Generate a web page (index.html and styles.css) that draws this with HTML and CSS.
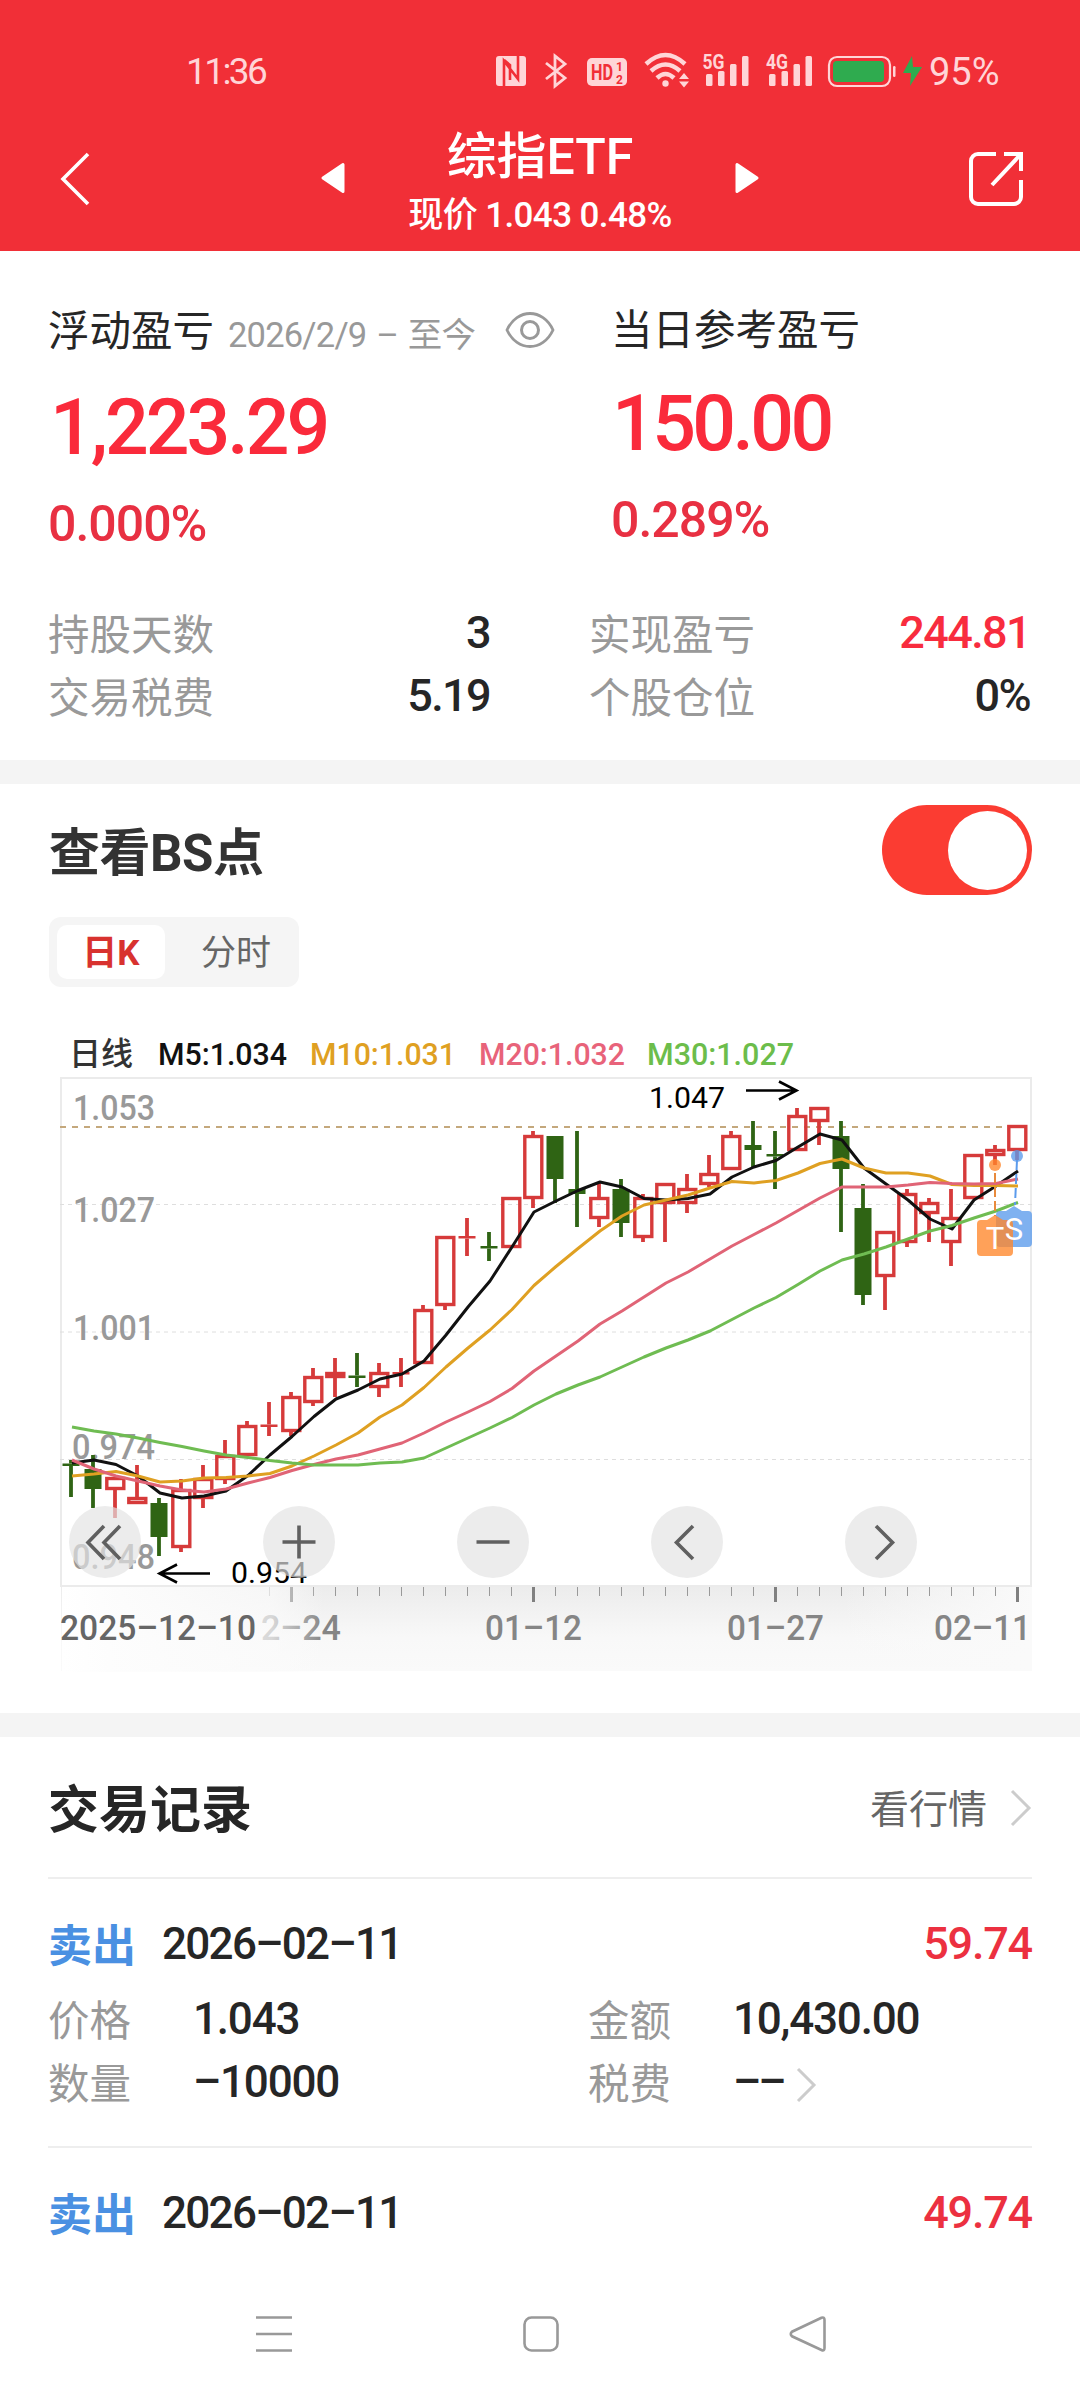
FILE: index.html
```html
<!DOCTYPE html>
<html lang="zh-CN">
<head>
<meta charset="utf-8">
<title>综指ETF</title>
<link rel="stylesheet" href="styles.css">
</head>
<body>
<header class="header">
  <div class="status">
    <span class="time">11:36</span>
    <svg class="status-icons" width="432" height="40" viewBox="494 50 432 40">
      <g fill="#ffd5d7">
        <rect x="496" y="56" width="30" height="30" rx="3"/>
        <path d="M504 86V61l14 18V56M504 60l6 5v15" fill="none" stroke="#f12f37" stroke-width="2.6"/>
        <path d="M546 63l19 15-10 8V56l10 8-19 15" fill="none" stroke="#ffd5d7" stroke-width="2.8"/>
        <rect x="587" y="58" width="40" height="28" rx="5"/>
        <path d="M646 64Q665.500 46 685 64" fill="none" stroke="#ffd5d7" stroke-width="4.500"/>
        <path d="M651 71Q665.500 58 680 71" fill="none" stroke="#ffd5d7" stroke-width="4.500"/>
        <path d="M657 78Q665.500 70 674 78" fill="none" stroke="#ffd5d7" stroke-width="4.500"/>
        <circle cx="665.500" cy="83.500" r="3.200"/>
        <path d="M679 79l5-6 5 6zM679 81.500l5 6 5-6z"/>
        <rect x="706" y="74" width="6.500" height="12" rx="1.500"/><rect x="718" y="71" width="6.500" height="15" rx="1.500"/><rect x="730" y="64" width="6.500" height="22" rx="1.500"/><rect x="742" y="56" width="6.500" height="30" rx="1.500"/>
        <rect x="769" y="74" width="6.500" height="12" rx="1.500"/><rect x="781.500" y="71" width="6.500" height="15" rx="1.500"/><rect x="793.500" y="64" width="6.500" height="22" rx="1.500"/><rect x="805.500" y="56" width="6.500" height="30" rx="1.500"/>
        <rect x="829" y="57" width="61" height="29" rx="8" fill="none" stroke="#ffd5d7" stroke-width="2.200"/>
        <rect x="893" y="66" width="2.500" height="11" rx="1.200"/>
      </g>
      <rect x="833" y="61" width="51" height="21" rx="4" fill="#2fab4f"/>
      <path d="M912 56l-9 17h8l-1 13 12-19h-9z" fill="#2fab4f"/>
      <g class="status-text">
        <text x="591" y="80" font-size="22" textLength="22" lengthAdjust="spacingAndGlyphs" fill="#f12f37">HD</text>
        <text x="616" y="71" font-size="12" fill="#f12f37">1</text>
        <text x="616" y="84" font-size="12" fill="#f12f37">2</text>
        <text x="702.500" y="69" font-size="20" textLength="22" lengthAdjust="spacingAndGlyphs" fill="#ffd5d7">5G</text>
        <text x="766" y="69" font-size="20" textLength="22" lengthAdjust="spacingAndGlyphs" fill="#ffd5d7">4G</text>
      </g>
    </svg>
    <span class="percent">95%</span>
  </div>
  <div class="nav">
    <svg class="back" width="34" height="56" viewBox="0 0 34 56"><path d="M30 3L5 28l25 25" fill="none" stroke="#fff" stroke-width="3.600"/></svg>
    <svg class="prev" width="24" height="32" viewBox="0 0 24 32"><path d="M22 2.500v27L2 16z" fill="#fff" stroke="#fff" stroke-width="3" stroke-linejoin="round"/></svg>
    <div class="heading">
      <h1>综指ETF</h1>
      <p>现价 1.043 0.48%</p>
    </div>
    <svg class="next" width="24" height="32" viewBox="0 0 24 32"><path d="M2 2.500v27L22 16z" fill="#fff" stroke="#fff" stroke-width="3" stroke-linejoin="round"/></svg>
    <svg class="share" width="56" height="56" viewBox="0 0 56 56"><path d="M28 3H10a7 7 0 0 0-7 7v36a7 7 0 0 0 7 7h36a7 7 0 0 0 7-7V29M36 3h17v17M53 3L24 34" fill="none" stroke="#fff" stroke-width="4"/></svg>
  </div>
</header>

<section class="summary">
  <div class="gains">
    <div class="gain gain-total">
      <div class="gain-label">浮动盈亏 <small>2026/2/9 – 至今</small>
        <svg width="50" height="38" viewBox="0 0 50 38"><path d="M2 19C12-3 38-3 48 19 38 41 12 41 2 19z" fill="none" stroke="#999" stroke-width="2.800"/><circle cx="25" cy="19" r="8.500" fill="none" stroke="#999" stroke-width="3"/></svg>
      </div>
      <div class="amount">1,223.29</div>
      <div class="rate">0.000%</div>
    </div>
    <div class="gain gain-day">
      <div class="gain-label">当日参考盈亏</div>
      <div class="amount">150.00</div>
      <div class="rate">0.289%</div>
    </div>
  </div>
  <dl class="stats">
    <div><dt>持股天数</dt><dd>3</dd></div>
    <div><dt>实现盈亏</dt><dd class="red">244.81</dd></div>
    <div><dt>交易税费</dt><dd>5.19</dd></div>
    <div><dt>个股仓位</dt><dd>0%</dd></div>
  </dl>
</section>

<section class="kline">
  <div class="kline-head">
    <h2>查看BS点</h2>
    <span class="toggle"></span>
  </div>
  <div class="tabs"><span class="tab active">日K</span><span class="tab">分时</span></div>
  <div class="chart">
    <svg id="chart" width="1080" height="660" viewBox="0 1026 1080 660">
      <defs>
        <linearGradient id="shade" x1="0" y1="0" x2="0" y2="1"><stop offset="0" stop-color="#ececec"/><stop offset=".6" stop-color="#f8f8f8"/><stop offset="1" stop-color="#fafafa"/></linearGradient>
        <linearGradient id="fade" x1="0" y1="0" x2="1" y2="0"><stop offset="0" stop-color="#fff"/><stop offset=".2" stop-color="#fdfdfd" stop-opacity=".95"/><stop offset=".8" stop-color="#fbfbfb" stop-opacity=".7"/><stop offset="1" stop-color="#fbfbfb" stop-opacity="0"/></linearGradient>
        <linearGradient id="fade-right" x1="0" y1="0" x2="1" y2="0"><stop offset="0" stop-color="#fafafa" stop-opacity="0"/><stop offset="1" stop-color="#fafafa"/></linearGradient>
      </defs>
      <g class="legend">
        <text x="69" y="1065" fill="#333" textLength="64">日线</text>
        <text x="158" y="1065" fill="#111" textLength="129" lengthAdjust="spacingAndGlyphs">M5:1.034</text>
        <text x="310" y="1065" fill="#dfa022" textLength="146" lengthAdjust="spacingAndGlyphs">M10:1.031</text>
        <text x="479" y="1065" fill="#e8637a" textLength="146" lengthAdjust="spacingAndGlyphs">M20:1.032</text>
        <text x="647" y="1065" fill="#6cbd4b" textLength="147" lengthAdjust="spacingAndGlyphs">M30:1.027</text>
      </g>
      <rect x="61" y="1078" width="970" height="508" fill="none" stroke="#ebebeb" stroke-width="2"/>
      <path d="M60 1204.500H1032M60 1332H1032M60 1459.500H1032" stroke="#dedede" stroke-dasharray="4 4"/>
      <path d="M60 1127H1006" stroke="#c4a87c" stroke-width="2" stroke-dasharray="6 6"/>
      <g class="prices">
        <text x="73" y="1120" textLength="82" lengthAdjust="spacingAndGlyphs">1.053</text>
        <text x="73" y="1222" textLength="82" lengthAdjust="spacingAndGlyphs">1.027</text>
        <text x="73" y="1340" textLength="82" lengthAdjust="spacingAndGlyphs">1.001</text>
        <text x="72" y="1459" textLength="83" lengthAdjust="spacingAndGlyphs">0.974</text>
        <text x="72" y="1569" textLength="83" lengthAdjust="spacingAndGlyphs">0.948</text>
      </g>
      <rect x="61" y="1587" width="971" height="84" fill="url(#shade)"/>
      <rect x="840" y="1587" width="192" height="84" fill="url(#fade-right)"/>
      <path id="ticks" stroke="#999" fill="none"/>
      <path d="M291.500 1587v15M533.500 1587v15M775.500 1587v15M1017.500 1587v15" stroke="#808080" stroke-width="3"/>
      <g class="dates">
        <text x="261" y="1640" textLength="80" lengthAdjust="spacingAndGlyphs">2–24</text>
        <text x="485" y="1640" textLength="97" lengthAdjust="spacingAndGlyphs">01–12</text>
        <text x="727" y="1640" textLength="97" lengthAdjust="spacingAndGlyphs">01–27</text>
        <text x="934" y="1640" textLength="97" lengthAdjust="spacingAndGlyphs">02–11</text>
        <rect x="62" y="1587" width="262" height="85" fill="url(#fade)"/>
        <text x="60" y="1640" fill="#666" textLength="196" lengthAdjust="spacingAndGlyphs">2025–12–10</text>
      </g>
      <g id="candles"></g>
      <g id="averages" fill="none" stroke-width="3" stroke-linejoin="round"></g>
      <g fill="none" stroke="#000" stroke-width="2.600">
        <path d="M746 1090.500h50M779 1081.500l17.500 9-17.500 9"/>
        <path d="M210 1573.500h-50M177 1564.500l-17.500 9 17.500 9"/>
      </g>
      <g class="extremes">
        <text x="649" y="1108" textLength="76" lengthAdjust="spacingAndGlyphs">1.047</text>
        <text x="231" y="1582.500" textLength="76" lengthAdjust="spacingAndGlyphs">0.954</text>
      </g>
      <path d="M1017 1160L1015 1205" stroke="#5b9bec" stroke-width="2" stroke-dasharray="10 4"/>
      <path d="M995 1173V1216" stroke="#e88a3c" stroke-width="2" stroke-dasharray="10 4"/>
      <g fill-opacity=".78">
        <circle cx="1017" cy="1156" r="6" fill="#5b9bec"/>
        <circle cx="995" cy="1165" r="6" fill="#ff872a"/>
        <path d="M1000 1211h6l8-5 8 5h6a4 4 0 0 1 4 4v28a4 4 0 0 1-4 4h-28a4 4 0 0 1-4-4v-28a4 4 0 0 1 4-4z" fill="#5b9bec"/>
        <path d="M981 1220h6l8-5 8 5h6a4 4 0 0 1 4 4v28a4 4 0 0 1-4 4h-28a4 4 0 0 1-4-4v-28a4 4 0 0 1 4-4z" fill="#ff872a"/>
      </g>
      <g class="marks"><text x="1014" y="1240">S</text><text x="995" y="1249">T</text></g>
    </svg>
    <div class="controls">
      <span><svg viewBox="0 0 72 72"><path d="M35 20L19 36.500 35 53M51 20L35 36.500 51 53"/></svg></span>
      <span><svg viewBox="0 0 72 72"><path d="M36 19.500v33M19.500 36h33"/></svg></span>
      <span><svg viewBox="0 0 72 72"><path d="M19.500 36h33"/></svg></span>
      <span><svg viewBox="0 0 72 72"><path d="M42 20L25.500 36.500 42 53"/></svg></span>
      <span><svg viewBox="0 0 72 72"><path d="M31 20L47.500 36.500 31 53"/></svg></span>
    </div>
  </div>
</section>

<section class="records">
  <div class="records-head">
    <h2>交易记录</h2>
    <span>看行情</span>
    <svg width="22" height="38" viewBox="0 0 22 38"><path d="M2 2l17 17L2 36" fill="none" stroke="#ccc" stroke-width="3"/></svg>
  </div>
  <article class="record">
    <div class="record-head"><b>卖出</b><time>2026–02–11</time><em>59.74</em></div>
    <dl>
      <dt>价格</dt><dd>1.043</dd><dt>金额</dt><dd>10,430.00</dd>
      <dt>数量</dt><dd>–10000</dd><dt>税费</dt><dd class="tax">–– <svg width="22" height="36" viewBox="0 0 22 36"><path d="M2 2l16 16L2 34" fill="none" stroke="#ccc" stroke-width="3"/></svg></dd>
    </dl>
  </article>
  <article class="record">
    <div class="record-head"><b>卖出</b><time>2026–02–11</time><em>49.74</em></div>
  </article>
</section>

<footer class="system-nav">
  <svg width="38" height="38" viewBox="0 0 38 38"><path d="M1 2.500h36M1 19h36M1 35.500h36"/></svg>
  <svg width="38" height="38" viewBox="0 0 38 38"><rect x="2.500" y="2.500" width="33" height="33" rx="7"/></svg>
  <svg width="38" height="38" viewBox="0 0 38 38"><path d="M32.500 2.800Q35.500 1.500 35.500 5v28q0 3.500-3 2L3 21.300Q.5 19 3 16.700z"/></svg>
</footer>
<script src="chart.js"></script>
</body>
</html>
```
FILE: styles.css
```css
* { box-sizing: border-box; margin: 0; padding: 0; }
body { width: 1080px; height: 2400px; overflow: hidden; background: #fff; color: #262626; font-family: Roboto, "Noto Sans CJK SC", sans-serif; }
svg { display: block; flex: none; }
h1, h2, b, em { font-weight: 500; font-style: normal; }

.header { height: 251px; background: #f12f37; color: #fff; }
.status { display: flex; align-items: center; height: 104px; padding: 40px 0 0 186px; color: #ffd5d7; font-size: 37px; line-height: 64px; }
.time { width: 308px; letter-spacing: -2.600px; }
.status-icons { margin-top: -4px; }
.percent { margin-left: 3px; font-size: 38px; letter-spacing: 0; }
.status-text { font-family: Roboto, sans-serif; font-weight: 700; }
.nav { display: flex; align-items: flex-start; padding-left: 58px; }
.back { margin-top: 47px; }
.prev { margin: 58px 0 0 229px; }
.heading { width: 390px; text-align: center; }
.heading h1 { height: 96px; padding-top: 17px; font-size: 50px; line-height: 72px; letter-spacing: 0; }
.heading p { font-size: 35px; font-weight: 500; line-height: 44px; letter-spacing: -.6px; margin-top: -6px; }
.next { margin-top: 58px; }
.share { margin: 47px 0 0 209px; }

.summary { height: 509px; padding: 48px 49px 0 48px; }
.gains { display: grid; grid-template-columns: 563px 1fr; height: 303px; }
.gain-label { display: flex; align-items: center; height: 64px; font-size: 41.500px; line-height: 64px; }
.gain-total .gain-label { padding-top: 2px; }
.gain-label small { margin: 6px 0 0 14px; color: #999; font-size: 34.500px; letter-spacing: -.8px; word-spacing: 2px; }
.gain-label svg { margin: -4px 0 0 30px; }
.amount { margin-top: 16px; color: #fa2a3b; font-size: 77px; font-weight: 500; line-height: 90px; letter-spacing: -3px; }
.rate { margin-top: 14px; color: #e83042; font-size: 50px; font-weight: 500; line-height: 74px; letter-spacing: -1px; }
.gain-total .amount { padding-left: 2px; margin-top: 20px; }
.gain-day .amount { padding-left: 1px; letter-spacing: -3.600px; }
.stats { display: grid; grid-template-columns: 442px 441px; column-gap: 99px; margin-top: -1px; }
.stats div { display: flex; justify-content: space-between; height: 63px; font-size: 41.500px; line-height: 63px; }
.stats dt { padding-top: 3px; color: #999; }
.stats dd { font-size: 45px; font-weight: 500; letter-spacing: -1.600px; }
.stats .red { color: #f82c3e; }

.kline { height: 953px; border-top: 24px solid #f4f4f4; }
.kline-head { display: flex; justify-content: space-between; height: 133px; padding: 21px 48px 0 49px; }
.kline-head h2 { padding-top: 4px; color: #333; font-size: 51px; font-weight: 700; line-height: 90px; letter-spacing: -.5px; }
.toggle { display: flex; justify-content: flex-end; width: 150px; height: 90px; padding: 5.500px; border-radius: 45px; background: #fb3c32; }
.toggle::after { content: ""; width: 79px; height: 79px; border-radius: 50%; background: #fff; }
.tabs { display: flex; width: 250px; height: 70px; margin-left: 49px; padding: 8px; border-radius: 12px; background: #f5f5f5; }
.tab { width: 108px; text-align: center; font-size: 35px; line-height: 56px; color: #666; }
.tab.active { border-radius: 10px; background: #fff; color: #d8322f; font-weight: 700; }
.tab { padding-top: 1px; }
.tab + .tab { margin-left: 17px; }
.chart { position: relative; margin-top: 39px; height: 660px; }
.chart text { font-family: Roboto, "Noto Sans CJK SC", sans-serif; }
.legend text { font-size: 32px; font-weight: 500; }
.prices text { fill: #999; font-size: 35px; font-weight: 500; }
.dates text { font-size: 35px; font-weight: 500; fill: #858585; }
.dates text:last-child { fill: #666; }
.extremes text { font-size: 30px; }
.marks text { fill: #fff; font-size: 31px; text-anchor: middle; }
.controls { position: absolute; left: 69px; top: 480px; display: flex; gap: 122px; }
.controls span { width: 72px; height: 72px; border-radius: 50%; background: rgba(227, 227, 227, .68); }
.controls path { fill: none; stroke: #606060; stroke-width: 3.600px; }

.records { height: 553px; border-top: 24px solid #f4f4f4; padding: 0 48px; }
.records-head { display: flex; align-items: center; height: 140px; padding-top: 2px; }
.records-head h2 { flex: 1; margin-top: -5px; font-size: 51px; font-weight: 700; }
.records-head span { margin: -4px 23px 0 0; color: #666; font-size: 39px; }
.record { border-top: 2px solid #eee; height: 269px; }
.record-head { display: flex; height: 110px; padding-top: 33px; line-height: 64px; }
.record-head b { width: 114px; padding-top: 3px; color: #4a90e2; font-size: 44px; font-weight: 700; }
.record-head time { flex: 1; font-size: 44px; font-weight: 500; letter-spacing: -1.700px; }
.record-head em { color: #ec3040; font-size: 45px; font-weight: 500; letter-spacing: -1.200px; }
.record dl { display: grid; grid-template-columns: 145px 395px 145px 1fr; margin-top: -1px; font-size: 41.500px; line-height: 63px; }
.record dt { height: 63px; padding-top: 2px; color: #999; }
.record dd { display: flex; align-items: center; height: 63px; font-size: 44px; font-weight: 500; letter-spacing: -1.200px; }
.record dd.tax { letter-spacing: -3px; }
.record dd svg { margin: 4px 0 0 12px; }

.system-nav { display: flex; gap: 229px; padding: 49px 0 0 255px; }
.system-nav path, .system-nav rect { fill: none; stroke: #999; stroke-width: 2.600px; }
```
FILE: chart.js
```js
// Daily candles: [up, high, body top, body bottom, low] in chart units
const candles = [
  [0,1460,1463.5,1466,1497],[0,1455,1469,1489,1508],[1,1477,1477,1490,1518],[1,1465,1497,1504,1504],[0,1498,1503,1537,1556],
  [1,1479,1489,1548,1552],[1,1465,1478,1499,1508],[1,1440,1455,1480,1484],[1,1421,1425,1456,1456],[1,1402,1424.5,1427,1436],
  [1,1392,1396,1432,1436],[1,1368,1376,1403,1406],[1,1358,1372,1378,1397],[0,1353,1375.5,1378,1387],[1,1363,1372,1388,1397],
  [1,1358,1372,1374.5,1387],[1,1305,1309,1364,1364],[1,1236,1236,1306,1310],[1,1218,1236,1238.5,1256],[0,1232,1246,1248.5,1261],
  [1,1197,1197,1248,1248],[1,1131,1135,1199,1208],[0,1136,1136,1179,1203],[0,1131,1189,1194,1227],[1,1182,1197,1219,1227],
  [0,1179,1189,1223,1237],[1,1194,1197,1238,1242],[1,1183,1183,1204,1242],[1,1174,1188,1204,1213],[1,1155,1173,1185,1187],
  [1,1131,1135,1170,1170],[0,1121,1145,1150,1167],[0,1131,1154,1156.5,1189],[1,1108,1115,1151,1151],[1,1107,1107,1122,1145],
  [0,1121,1136,1169,1232],[0,1184,1208,1295,1305],[1,1231,1231,1277,1310],[1,1189,1193,1243,1247],[1,1198,1202,1214,1242],
  [1,1189,1217,1243,1266],[1,1154,1154,1199,1199],[1,1145,1149,1156,1165],[1,1125,1125,1151,1160]
];
const averages = {
  '#111': [1463,1460,1464.5,1476,1493,1498,1496,1491,1475.5,1455,1436.5,1416.5,1399,1390,1379,1374,1361,1335,1307,1281,1247,1212,1201,1190.5,1182,1187,1198.5,1200,1198.5,1194,1177,1167,1160.5,1147,1134,1140,1168,1184,1200,1219,1229,1200,1186,1171],
  '#dfa022': [1476,1474,1471.5,1476,1482,1481,1478,1477.5,1476,1473.5,1466,1456,1445,1433,1417,1405,1387.5,1367,1348,1330,1309.5,1285.5,1266.5,1248.5,1231,1216,1205,1200,1195,1188,1181.5,1183,1180.5,1173,1163.5,1159,1168,1173,1173,1176,1184.5,1185.5,1185.5,1186],
  '#e06476': [1460,1469,1476,1481,1486,1490,1492,1489,1483,1477.5,1470.5,1464.5,1459,1455,1449,1443,1433,1422,1412,1401.5,1388.5,1371,1356,1341,1324,1311,1297,1283,1272,1259,1246,1234.5,1223,1210.5,1198,1187,1187,1187,1185,1182.5,1183.5,1184,1183.5,1179],
  '#6fbc52': [1427,1431,1434,1438,1442.5,1446.5,1451,1455,1457.5,1460.5,1463,1465,1465,1465,1463,1462,1458,1448,1438,1428,1417.5,1405,1394,1385,1377,1367,1357,1348,1340,1331,1319.5,1308,1297.5,1284.5,1271,1260,1254,1247,1239,1231,1225.5,1218,1211,1202.5]
};
const x = i => 71 + 22 * i;
document.getElementById('candles').innerHTML = candles.map(([up, high, top, bottom, low], i) => {
  const c = up ? '#d63a3a' : '#2f6414', h = bottom - top;
  const wick = `<path d="M${x(i)} ${high}V${top}M${x(i)} ${bottom}V${low}" stroke="${c}" stroke-width="3.8"/>`;
  const body = up && h > 3
    ? `<rect x="${x(i) - 8.2}" y="${top + 1.5}" width="17" height="${h - 3}" fill="none" stroke="${c}" stroke-width="3.4"/>`
    : `<rect x="${x(i) - 8.5}" y="${top}" width="17" height="${h}" fill="${c}"/>`;
  return wick + body;
}).join('');
document.getElementById('averages').innerHTML = Object.entries(averages).map(([c, v]) =>
  `<polyline stroke="${c}" points="${v.map((y, i) => (x(i) + 1) + ',' + y).join(' ')}"/>`).join('');
let ticks = '';
for (let i = 9; i < 44; i++) ticks += `M${x(i) + .5} 1587v9`;
document.getElementById('ticks').setAttribute('d', ticks);
```
